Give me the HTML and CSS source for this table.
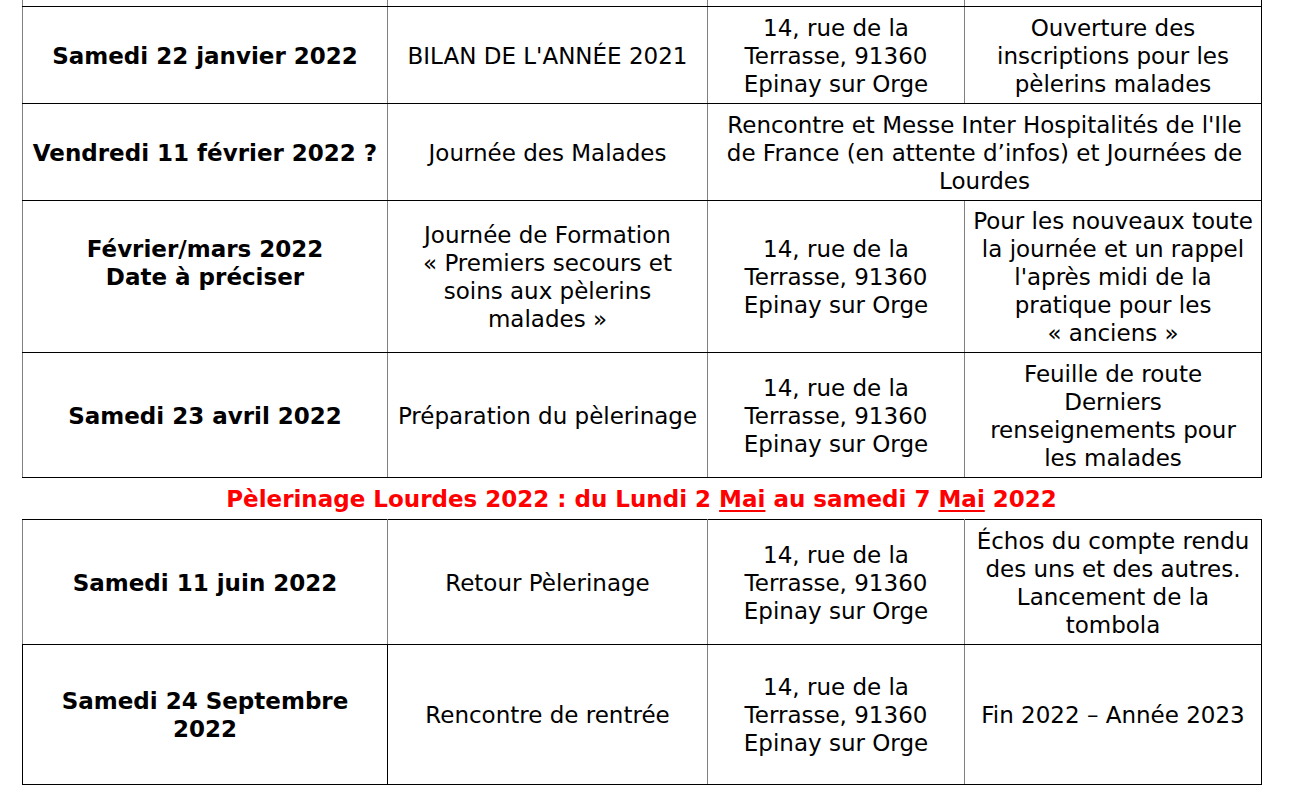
FILE: index.html
```html
<!DOCTYPE html>
<html lang="fr">
<head>
<meta charset="utf-8">
<title>Calendrier 2022</title>
<link rel="stylesheet" href="styles.css">
</head>
<body>
<table class="plan">
  <colgroup>
    <col class="c1"><col class="c2"><col class="c3"><col class="c4">
  </colgroup>
  <tr class="r0">
    <td class="g"></td><td class="g"></td><td class="g"></td><td class="k"></td>
  </tr>
  <tr class="r97">
    <td class="g date">Samedi 22 janvier 2022</td>
    <td class="g">BILAN DE L'ANNÉE 2021</td>
    <td class="g">14, rue de la<br>Terrasse, 91360<br>Epinay sur Orge</td>
    <td class="k">Ouverture des<br>inscriptions pour les<br>pèlerins malades</td>
  </tr>
  <tr class="r97">
    <td class="g date">Vendredi 11 février 2022 ?</td>
    <td class="g">Journée des Malades</td>
    <td class="k" colspan="2">Rencontre et Messe Inter Hospitalités de l'Ile<br>de France (en attente d’infos) et Journées de<br>Lourdes</td>
  </tr>
  <tr class="r152">
    <td class="g date raised">Février/mars 2022<br>Date à préciser</td>
    <td class="g">Journée de Formation<br>« Premiers secours et<br>soins aux pèlerins<br>malades »</td>
    <td class="g">14, rue de la<br>Terrasse, 91360<br>Epinay sur Orge</td>
    <td class="k">Pour les nouveaux toute<br>la journée et un rappel<br>l'après midi de la<br>pratique pour les<br>« anciens »</td>
  </tr>
  <tr class="r125">
    <td class="g date">Samedi 23 avril 2022</td>
    <td class="g">Préparation du pèlerinage</td>
    <td class="g">14, rue de la<br>Terrasse, 91360<br>Epinay sur Orge</td>
    <td class="k">Feuille de route<br>Derniers<br>renseignements pour<br>les malades</td>
  </tr>
</table>
<div class="pilgrimage"><span>Pèlerinage Lourdes 2022 : du Lundi 2 <u>Mai</u> au samedi 7 <u>Mai</u> 2022</span></div>
<table class="plan">
  <colgroup>
    <col class="c1"><col class="c2"><col class="c3"><col class="c4">
  </colgroup>
  <tr class="r125">
    <td class="g date">Samedi 11 juin 2022</td>
    <td class="g">Retour Pèlerinage</td>
    <td class="g">14, rue de la<br>Terrasse, 91360<br>Epinay sur Orge</td>
    <td class="k">Échos du compte rendu<br>des uns et des autres.<br>Lancement de la<br>tombola</td>
  </tr>
  <tr class="r140">
    <td class="k date">Samedi 24 Septembre<br>2022</td>
    <td class="g">Rencontre de rentrée</td>
    <td class="g">14, rue de la<br>Terrasse, 91360<br>Epinay sur Orge</td>
    <td class="k">Fin 2022 – Année 2023</td>
  </tr>
</table>
</body>
</html>
```
FILE: styles.css
```css
html, body {
  margin: 0;
  padding: 0;
  background: #ffffff;
}

body {
  font-family: "DejaVu Sans", Verdana, sans-serif;
  font-size: 23px;
  line-height: 28px;
  color: #000000;
}

.plan {
  border-collapse: collapse;
  table-layout: fixed;
  width: 1239px;
  margin-left: 22px;
}

.c1 { width: 365px; }
.c2 { width: 320px; }
.c3 { width: 257px; }
.c4 { width: 297px; }

.plan td {
  border-top: 1px solid #000000;
  border-bottom: 1px solid #000000;
  border-left: 1px solid #808080;
  border-right: 1px solid #000000;
  padding: 1px 4px 0;
  text-align: center;
  vertical-align: middle;
  overflow: hidden;
}

.plan td.g { border-right-color: #808080; }
.plan td:first-child { border-left-color: #808080; }
.plan td.k:first-child { border-left-color: #000000; }

.plan .r0 td {
  border-top: none;
  height: 6px;
  padding: 0;
}

.plan td.raised {
  padding-bottom: 28px;
}

.r97 { height: 97px; }
.r152 { height: 152px; }
.r125 { height: 125px; }
.r140 { height: 140px; }

.date {
  font-weight: bold;
}

.pilgrimage {
  margin-left: 22px;
  width: 1239px;
  height: 41px;
  display: flex;
  align-items: center;
  justify-content: center;
  font-weight: bold;
  color: #ff0000;
}

.pilgrimage u {
  text-decoration-thickness: 2px;
  text-underline-offset: 3px;
}
```
